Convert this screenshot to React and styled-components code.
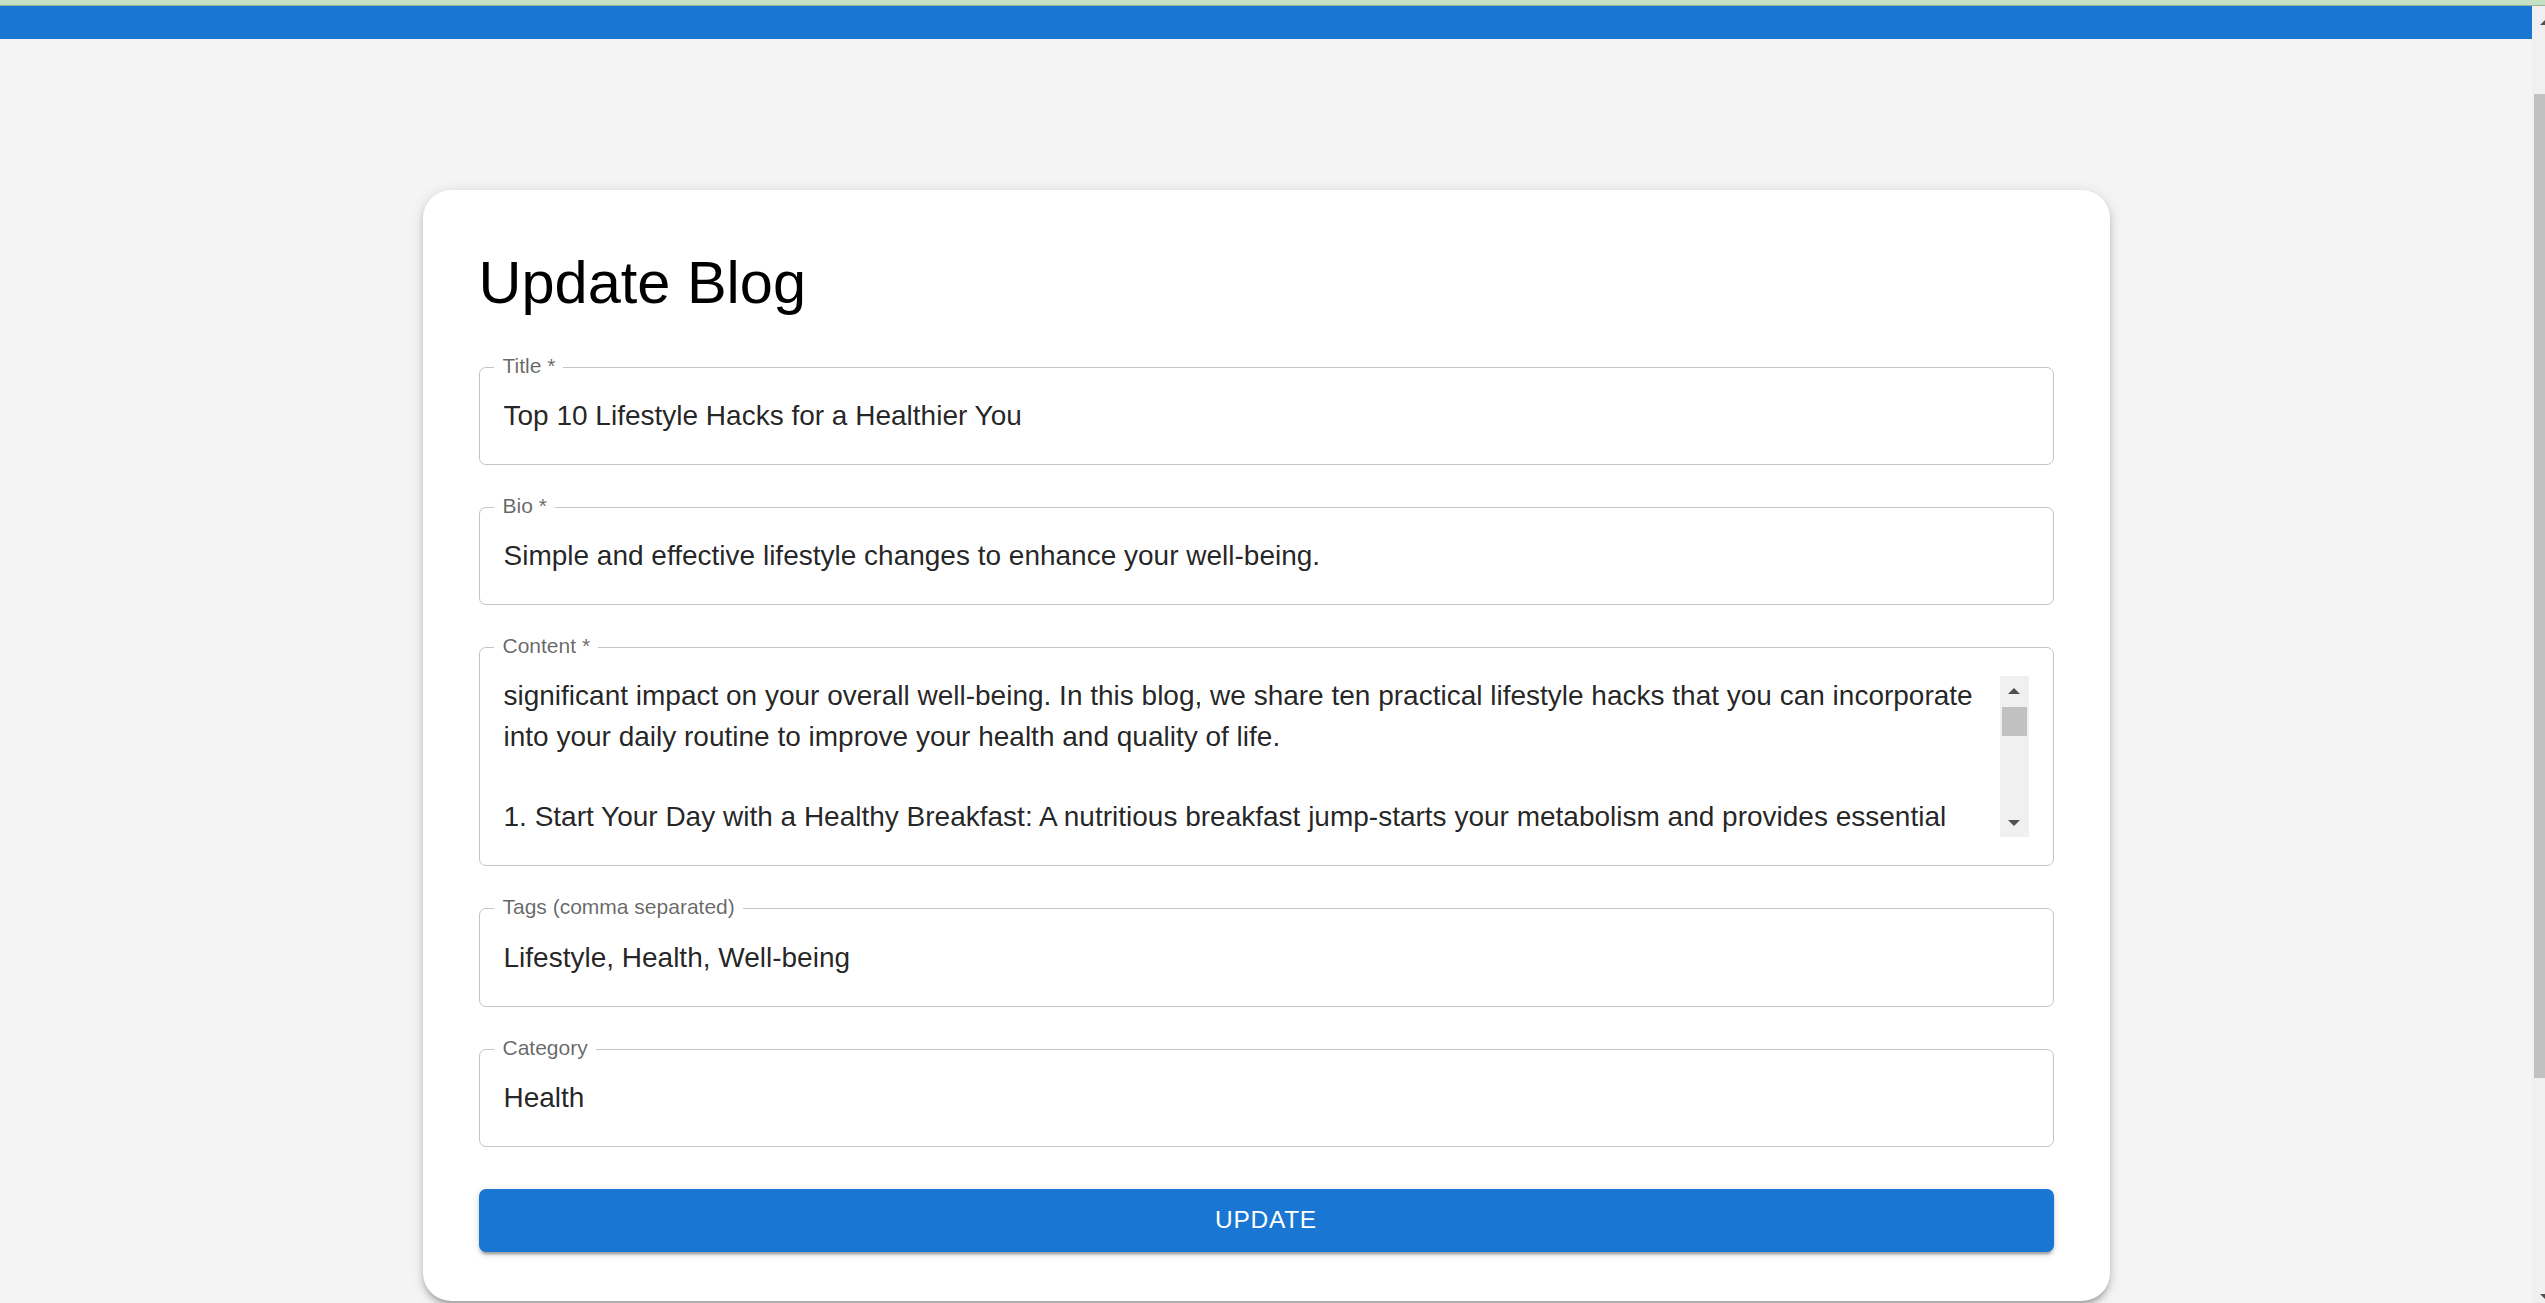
import React from "react";
import styled, { createGlobalStyle } from "styled-components";

const GlobalStyle = createGlobalStyle`
  html, body {
    margin: 0;
    height: 100%;
    overflow: hidden;
    background-color: #f4f4f4;
    font-family: "Liberation Sans", Arial, Helvetica, sans-serif;
  }
  * {
    box-sizing: border-box;
  }
`;

const Page = styled.div`
  display: flex;
  flex-direction: column;
  height: 100vh;
`;

const BrowserStrip = styled.div`
  height: 6px;
  flex-shrink: 0;
  background-color: #c5e1c5;
  border-bottom: 1px solid #98b098;
`;

const Viewport = styled.div`
  flex: 1;
  display: flex;
  min-height: 0;
`;

const Main = styled.div`
  flex: 1;
  display: flex;
  flex-direction: column;
  align-items: center;
  overflow: hidden;
`;

const AppBar = styled.div`
  align-self: stretch;
  height: 33px;
  flex-shrink: 0;
  background-color: #1976d2;
`;

const Card = styled.div`
  width: 1687px;
  margin-top: 151px;
  padding: 56px 56px 49px;
  background-color: #fff;
  border-radius: 28px;
  box-shadow: 0 5px 5px -3px rgba(0, 0, 0, 0.2), 0 5px 7px 0 rgba(0, 0, 0, 0.14),
    0 2px 14px 0 rgba(0, 0, 0, 0.12);
  flex-shrink: 0;
`;

const Heading = styled.h4`
  margin: 0;
  font-size: 59.5px;
  font-weight: 400;
  line-height: 1.235;
  color: #000;
`;

const Form = styled.form`
  display: flex;
  flex-direction: column;
  gap: 42px;
  margin-top: 47.5px;
`;

const Field = styled.div`
  position: relative;
  display: flex;
  border: 1px solid #c4c4c4;
  border-radius: 7px;
  padding: 28px 24px 28px 24px;
`;

const Label = styled.label`
  position: absolute;
  top: -13px;
  left: 14px;
  padding: 0 8px 0 9px;
  background-color: #fff;
  font-size: 21px;
  line-height: 21px;
  color: rgba(0, 0, 0, 0.6);
  white-space: nowrap;
`;

const Input = styled.input`
  flex: 1;
  height: 40.25px;
  padding: 0;
  border: none;
  outline: none;
  background: transparent;
  font: inherit;
  font-size: 28px;
  line-height: 40.25px;
  color: rgba(0, 0, 0, 0.87);
`;

const TextArea = styled.div`
  flex: 1;
  height: 161px;
  overflow: hidden;
  white-space: pre-wrap;
  font-size: 28px;
  line-height: 40.25px;
  color: rgba(0, 0, 0, 0.87);
`;

const ScrollTrack = styled.div`
  display: flex;
  flex-direction: column;
  align-items: center;
  width: ${(p) => p.$width}px;
  background-color: #f0f0f0;
  flex-shrink: 0;
`;

const ArrowButton = styled.div`
  display: flex;
  align-items: center;
  justify-content: center;
  height: ${(p) => p.$size}px;
  width: 100%;
  flex-shrink: 0;
`;

const Triangle = styled.span`
  width: 0;
  height: 0;
  border-left: ${(p) => p.$size}px solid transparent;
  border-right: ${(p) => p.$size}px solid transparent;
  ${(p) =>
    p.$down
      ? `border-top: ${p.$size}px solid #505050;`
      : `border-bottom: ${p.$size}px solid #505050;`}
`;

const Thumb = styled.div`
  width: calc(100% - 4px);
  height: ${(p) => p.$height}px;
  margin-top: ${(p) => p.$offset}px;
  background-color: #c1c1c1;
  flex-shrink: 0;
`;

const Spacer = styled.div`
  flex: 1;
`;

const PageScrollbar = styled.div`
  position: relative;
  width: 13px;
  flex-shrink: 0;
  background-color: #f0f0f0;
  overflow: hidden;
  display: flex;
  flex-direction: column;
  padding-left: 2px;
`;

const PageArrow = styled.span`
  margin: 14px 0 0 6px;
  width: 0;
  height: 0;
  border-left: 5px solid transparent;
  border-right: 5px solid transparent;
  ${(p) =>
    p.$down
      ? `border-top: 5px solid #505050; margin: 0 0 4px 6px;`
      : `border-bottom: 5px solid #505050;`}
`;

const PageThumb = styled.div`
  margin-top: 69px;
  height: 984px;
  background-color: #c1c1c1;
`;

const UpdateButton = styled.button`
  height: 63px;
  border: none;
  border-radius: 7px;
  background-color: #1976d2;
  color: #fff;
  font-family: inherit;
  font-size: 24.5px;
  font-weight: 500;
  letter-spacing: 0.7px;
  text-transform: uppercase;
  cursor: pointer;
  box-shadow: 0 5px 2px -3px rgba(0, 0, 0, 0.2), 0 3px 3px 0 rgba(0, 0, 0, 0.14),
    0 2px 9px 0 rgba(0, 0, 0, 0.12);
`;

const contentText =
  "significant impact on your overall well-being. In this blog, we share ten practical lifestyle hacks that you can incorporate into your daily routine to improve your health and quality of life.\n\n1. Start Your Day with a Healthy Breakfast: A nutritious breakfast jump-starts your metabolism and provides essential nutrients to fuel your body throughout the day.";

const fields = [
  { label: "Title *", value: "Top 10 Lifestyle Hacks for a Healthier You" },
  { label: "Bio *", value: "Simple and effective lifestyle changes to enhance your well-being." },
];

const lowerFields = [
  { label: "Tags (comma separated)", value: "Lifestyle, Health, Well-being" },
  { label: "Category", value: "Health" },
];

const TextField = ({ label, value }) => (
  <Field>
    <Label>{label}</Label>
    <Input value={value} readOnly />
  </Field>
);

export default function App() {
  return (
    <>
      <GlobalStyle />
      <Page>
        <BrowserStrip />
        <Viewport>
          <Main>
            <AppBar />
            <Card>
              <Heading>Update Blog</Heading>
              <Form onSubmit={(e) => e.preventDefault()}>
                {fields.map((f) => (
                  <TextField key={f.label} {...f} />
                ))}
                <Field>
                  <Label>Content *</Label>
                  <TextArea>{contentText}</TextArea>
                  <ScrollTrack $width={29}>
                    <ArrowButton $size={29}>
                      <Triangle $size={6} />
                    </ArrowButton>
                    <Thumb $height={29} $offset={2} />
                    <Spacer />
                    <ArrowButton $size={29}>
                      <Triangle $size={6} $down />
                    </ArrowButton>
                  </ScrollTrack>
                </Field>
                {lowerFields.map((f) => (
                  <TextField key={f.label} {...f} />
                ))}
                <UpdateButton type="submit">Update</UpdateButton>
              </Form>
            </Card>
          </Main>
          <PageScrollbar>
            <PageArrow />
            <PageThumb />
            <Spacer />
            <PageArrow $down />
          </PageScrollbar>
        </Viewport>
      </Page>
    </>
  );
}
